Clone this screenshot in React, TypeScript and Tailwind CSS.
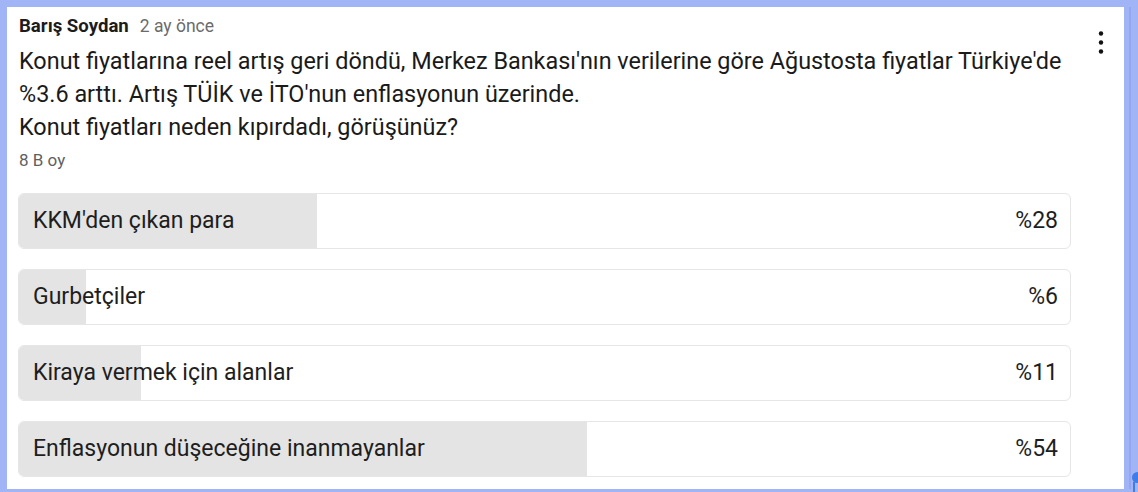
import React from 'react';

const options = [
  { label: "KKM'den çıkan para", pct: 28.4 , shown: 28 },
  { label: 'Gurbetçiler', pct: 6.4, shown: 6 },
  { label: 'Kiraya vermek için alanlar', pct: 11.6, shown: 11 },
  { label: 'Enflasyonun düşeceğine inanmayanlar', pct: 54, shown: 54 },
];

function MoreIcon() {
  return (
    <svg width="6" height="23" viewBox="0 0 6 23" className="text-[#111]">
      <circle cx="3" cy="2.5" r="2.2" fill="currentColor" />
      <circle cx="3" cy="11.5" r="2.2" fill="currentColor" />
      <circle cx="3" cy="20.5" r="2.2" fill="currentColor" />
    </svg>
  );
}

export default function App() {
  return (
    <div className="relative flex w-[1138px] h-[492px] bg-[#a1b5f6] pl-[7px] pt-[7px] pb-[3px] font-['Roboto',sans-serif]">
      <div className="flex flex-1 bg-white pl-[11px]">
        <div className="flex w-[1053px] flex-col">
          <div className="flex items-baseline gap-[11px] pl-[1px] pt-[9px] leading-[20px]">
            <span className="text-[18.6px] font-bold text-[#1c1c1c]">Barış Soydan</span>
            <span className="text-[17.5px] text-[#6b6b6b]">2 ay önce</span>
          </div>
          <p className="mt-[9px] w-[1062px] pl-[1px] text-[23.4px] leading-[33px] text-[#1a1a1a]">
            Konut fiyatlarına reel artış geri döndü, Merkez Bankası'nın verilerine göre Ağustosta fiyatlar Türkiye'de %3.6 arttı. Artış TÜİK ve İTO'nun enflasyonun üzerinde.
            <br />
            Konut fiyatları neden kıpırdadı, görüşünüz?
          </p>
          <div className="mt-[6px] pl-[1px] text-[17px] leading-[20px] text-[#5f5f5f]">8 B oy</div>
          <div className="mt-[23px] flex flex-col gap-[20px]">
            {options.map((o) => (
              <div
                key={o.label}
                className="relative flex h-[56px] items-center justify-between overflow-hidden rounded-[6px] border border-[#e6e6e6] pl-[14px] pr-[12px]"
              >
                <div
                  className="absolute inset-y-0 left-0 bg-[#e4e4e4]"
                  style={{ width: `${o.pct}%` }}
                />
                <span className="relative text-[23px] text-[#1e1e1e]">{o.label}</span>
                <span className="relative text-[23px] text-[#1e1e1e]">%{o.shown}</span>
              </div>
            ))}
          </div>
        </div>
        <div className="flex flex-1 justify-end pt-[24px] pr-[20px]">
          <div className="h-fit">
            <MoreIcon />
          </div>
        </div>
      </div>
      <div className="flex w-[14px] justify-center">
        <div className="ml-[-2px] w-[2px] bg-[#93a8f0]" />
      </div>
      <div className="absolute right-0 top-[472px] h-[11px] w-[6px] rounded-l-full bg-[#3f7de8]" />
      <div className="absolute right-[3px] top-[482px] h-[10px] w-[2px] bg-[#3f7de8]" />
    </div>
  );
}
